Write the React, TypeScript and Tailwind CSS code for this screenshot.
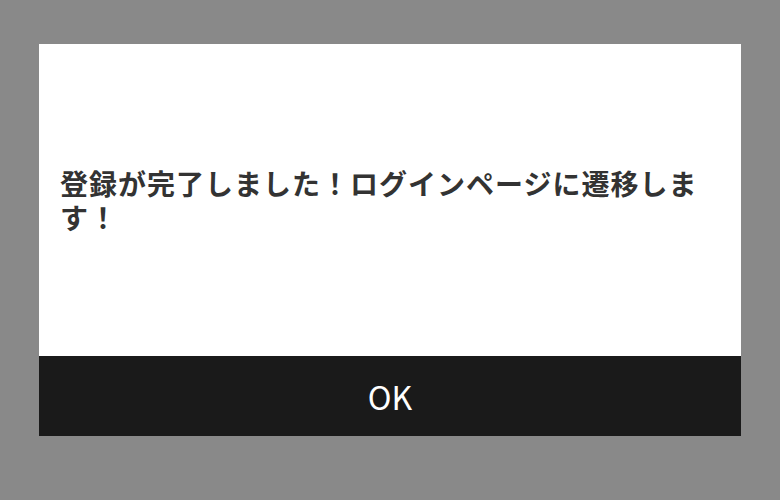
export default function App() {
  return (
    <div className="flex h-[500px] w-[780px] items-start justify-center bg-[#898989] pt-[44px] font-['Noto_Sans_CJK_JP',sans-serif]">
      <div className="flex h-[392px] w-[702px] flex-col bg-white">
        <div className="flex flex-1 items-center px-[21px]">
          <p className="text-[28px] font-bold leading-[34px] tracking-[1px] text-[#333333]">
            登録が完了しました！ログインページに遷移します！
          </p>
        </div>
        <button className="flex h-[80px] items-center justify-center bg-[#1a1a1a] text-[32px] text-white">
          OK
        </button>
      </div>
    </div>
  );
}
